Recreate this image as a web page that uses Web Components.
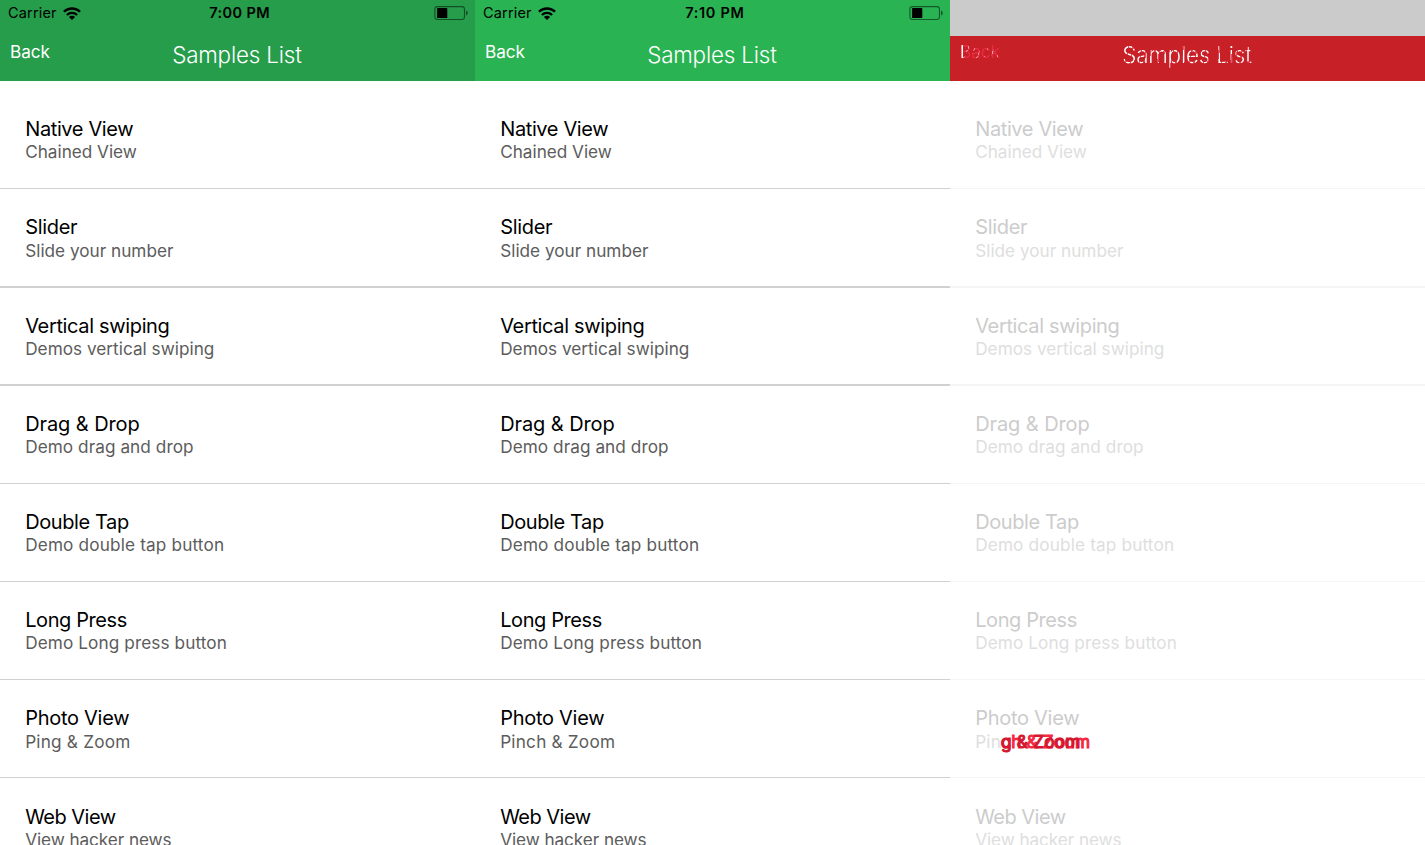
<!DOCTYPE html>
<html lang="en"><head><meta charset="utf-8"><title>Samples List</title>
<style>html,body{margin:0;height:845px;overflow:hidden;background:#fff;font-family:Inter,"Liberation Sans",sans-serif}</style></head>
<body><compare-page></compare-page>
<script>
const ctx=document.createElement('canvas').getContext('2d');
/* Text whose visible ink spans the width given in "ink", by letter spacing. */
class FitText extends HTMLElement{
  connectedCallback(){
    const t=this.textContent,root=this.attachShadow({mode:'open'});
    root.innerHTML='<style>:host{display:block;white-space:pre}</style><slot></slot>';
    const cs=getComputedStyle(this);
    ctx.font=`${cs.fontWeight} ${cs.fontSize} Inter`;
    const m=ctx.measureText(t),w=m.actualBoundingBoxLeft+m.actualBoundingBoxRight;
    const ls=(this.getAttribute('ink')-w)/(t.length-1);
    this.style.letterSpacing=ls.toFixed(3)+'px';
    this.style.marginRight=(-ls).toFixed(3)+'px';
  }
}
customElements.define('fit-text',FitText);

class StatusBar extends HTMLElement{
  connectedCallback(){
    this.attachShadow({mode:'open'}).innerHTML=`<style>
    :host{display:grid;grid-template-columns:1fr auto 1fr;height:26px;align-items:center;color:#000;font-size:14.5px;line-height:26px;padding:0 7px 0 7px;box-sizing:border-box}
    .l{display:flex;align-items:center;gap:7px;padding:0 0 0 1px}.t{font-weight:600;font-size:14.5px;padding:0 0 0 4px}.r{display:flex;justify-content:flex-end}svg{display:block}</style>
    <div class="l"><fit-text ink="49">Carrier</fit-text><svg width="18" height="13" viewBox="0 0 18 13"><g fill="none" stroke="#000" stroke-width="2.3"><path d="M.9 4.8a11.6 11.6 0 0 1 16.2 0"/><path d="M3.9 8a7.3 7.3 0 0 1 10.2 0"/></g><path d="M5.9 10a4.4 4.4 0 0 1 6.2 0L9 13z"/></svg></div>
    <div class="t"><fit-text ink="${this.getAttribute('ink')}">${this.getAttribute('time')}</fit-text></div>
    <div class="r"><svg width="34" height="14" viewBox="0 0 34 14"><rect x=".9" y=".6" width="29.6" height="12.9" rx="2.6" fill="none" stroke="#000" stroke-opacity=".5" stroke-width="1.1"/><rect x="3.1" y="2.1" width="10.2" height="9.9" rx=".6"/><path d="M32 4.6q1.8.7 1.8 2.4t-1.8 2.4z" opacity=".5"/></svg></div>`;
  }
}
customElements.define('status-bar',StatusBar);

class NavBar extends HTMLElement{
  connectedCallback(){
    this.attachShadow({mode:'open'}).innerHTML=`<style>
    :host{display:grid;grid-template-columns:1fr auto 1fr;height:45px;color:#fff;padding:0 10px;box-sizing:border-box}
    .b{font-size:17.2px;line-height:22px;padding-top:5px}.t{font-size:22.4px;line-height:28px;padding-top:5px;font-weight:350;margin-left:-1px}
    .b fit-text{width:max-content}
    :host([diff]) .b{color:transparent;background:repeating-linear-gradient(115deg,#fff8 0 1px,transparent 1px 6px),linear-gradient(90deg,#fff 3px,#eb2b42 3px);background-clip:text;-webkit-background-clip:text}
    :host([diff]) .t{color:transparent;font-weight:350;background:repeating-linear-gradient(100deg,#fff 0 3px,#ee5364 3px 4.5px);background-clip:text;-webkit-background-clip:text}
    </style><div class="b"><fit-text ink="39.5">Back</fit-text></div><div class="t"><fit-text ink="129">Samples List</fit-text></div>`;
  }
}
customElements.define('nav-bar',NavBar);

class SampleRow extends HTMLElement{
  connectedCallback(){
    const a=n=>this.getAttribute(n);
    this.attachShadow({mode:'open'}).innerHTML=`<style>
    :host{display:flex;flex-direction:column;justify-content:flex-end;box-sizing:border-box;padding:0 0 25px 25.2px;border-bottom:1px solid var(--line)}
    .t{font-size:20px;line-height:24px;color:var(--title)}
    .s{position:relative;font-size:17.2px;line-height:22px;color:var(--sub)}
    :host([low]) .s{transform:translateY(1px)}
    :host([lowtitle]) .t{transform:translateY(1px)}
    .o{position:absolute;left:0;top:0;-webkit-text-stroke:1.1px;color:#f42a43}.o.d{color:#d3182f}
    .o{clip-path:inset(0 -10px 0 25.5px)}
    </style><fit-text class="t" ink="${a('tw')}">${a('t')}</fit-text>
    <div class="s"><fit-text ink="${a('sw')}">${a('s')}</fit-text>${this.hasAttribute('changed')?'<div class="o"><fit-text ink="112.7">Pinch &amp; Zoom</fit-text></div><div class="o d"><fit-text ink="103">Ping &amp; Zoom</fit-text></div>':''}</div>`;
  }
}
customElements.define('sample-row',SampleRow);

const rows=[['Native View',107,'Chained View',110.6,108,1,''],['Slider',51.8,'Slide your number',148.8,99,2,'low'],['Vertical swiping',143.4,'Demos vertical swiping',187.6,98,2,'low lowtitle'],['Drag & Drop',113.3,'Demo drag and drop',166.8,98,1,''],['Double Tap',102.7,'Demo double tap button',196.7,98,1,''],['Long Press',100.5,'Demo Long press button',199.5,98,1,''],['Photo View',103,'Ping & Zoom',103,98,1,'low'],['Web View',90.5,'View hacker news',146.4,98,1,'low lowtitle']];
class PhoneShot extends HTMLElement{
  connectedCallback(){
    const k=this.getAttribute('kind');
    const e=s=>s.replace('&','&amp;');
    const list=rows.map((r,i)=>{let s=r[2],w=r[3],c=r[6];
      if(i===6&&k==='new'){s='Pinch & Zoom';w=112.7}
      if(i===6&&k==='diff')c+=' changed';
      return `<sample-row ${c} t="${e(r[0])}" tw="${r[1]}" s="${e(s)}" sw="${w}" style="height:${r[4]}px;border-bottom-width:${r[5]}px"></sample-row>`}).join('');
    const d=k==='diff';
    this.attachShadow({mode:'open'}).innerHTML=`<style>
    :host{display:block;height:845px;overflow:hidden;background:#fff;--title:#000;--sub:#5c5c5c;--line:#d1d1d1}
    header{height:81px;background:#259d4b}:host([kind=new]) header{background:#29b352}
    :host([kind=diff]){--title:#ccc;--sub:#dedede;--line:#f5f5f5}
    :host([kind=diff]) header{background:#c72027}.mask{height:36px;background:#cbcbcb}.gap{height:10px}
    </style><header>${d?'<div class="mask"></div>':`<status-bar time="${k==='new'?'7:10 PM':'7:00 PM'}" ink="${k==='new'?58.3:60}"></status-bar><div class="gap"></div>`}<nav-bar ${d?'diff':''}></nav-bar></header><main>${list}</main>`;
  }
}
customElements.define('phone-shot',PhoneShot);

class ComparePage extends HTMLElement{
  connectedCallback(){
    this.attachShadow({mode:'open'}).innerHTML=`<style>:host{display:grid;grid-template-columns:repeat(3,475px);width:1425px;height:845px;overflow:hidden}</style><phone-shot kind="old"></phone-shot><phone-shot kind="new"></phone-shot><phone-shot kind="diff"></phone-shot>`;
  }
}
customElements.define('compare-page',ComparePage);
</script></body></html>
